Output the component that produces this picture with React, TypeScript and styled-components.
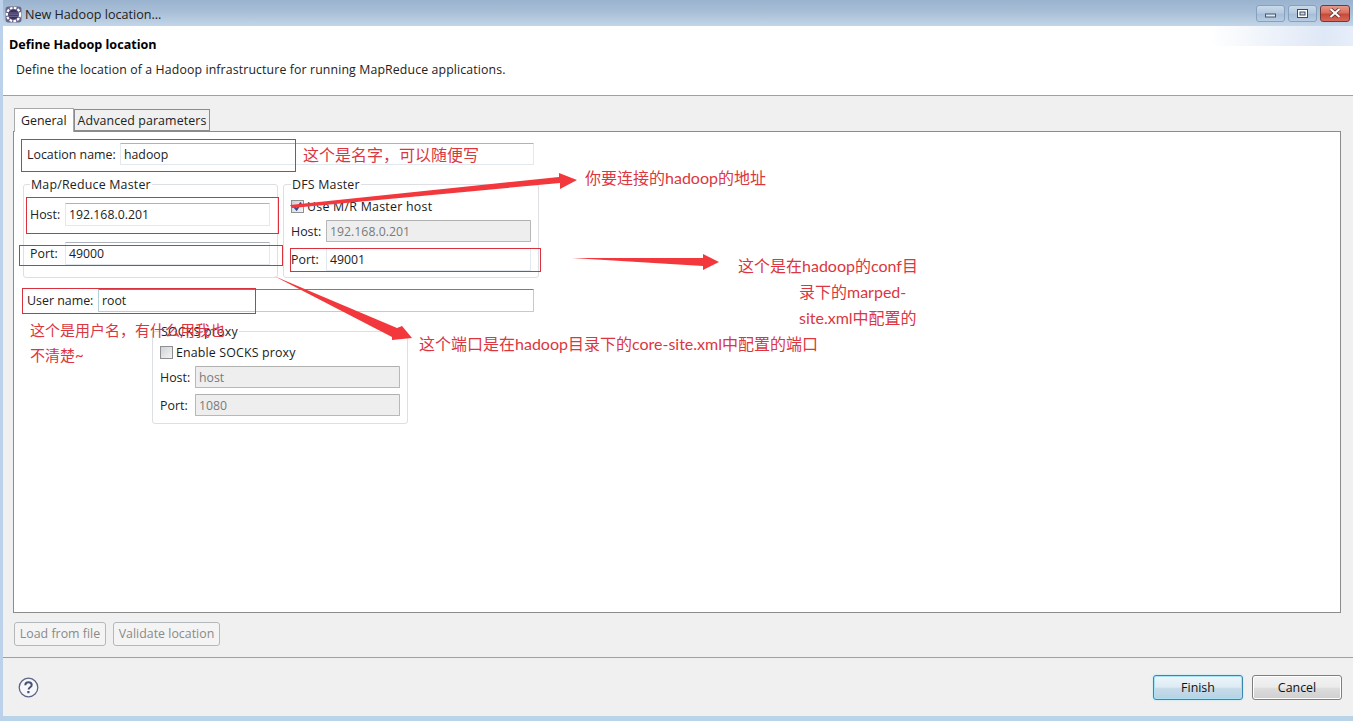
import React from "react";
import styled, { createGlobalStyle } from "styled-components";

const Global = createGlobalStyle`
  html, body { margin: 0; padding: 0; background: #f0f0f0; }
  * { box-sizing: border-box; }
`;

const Win = styled.div`
  position: relative;
  width: 1353px;
  height: 721px;
  overflow: hidden;
  display: flex;
  flex-direction: column;
  background: #f0f0f0;
  border-left: 3px solid #bcd2ea;
  border-bottom: 5px solid #b9d3e8;
  font-family: "Open Sans", "Noto Sans", sans-serif;
  font-size: 12.4px;
  color: #1a1a1a;
`;

const TitleBar = styled.div`
  height: 26px;
  flex: none;
  margin-left: -3px;
  padding: 3px 3px 0 5px;
  display: flex;
  align-items: center;
  gap: 3px;
  background: linear-gradient(180deg, #9ab3ce 0%, #a9c0d8 50%, #c3d6e8 100%);
`;

const TitleText = styled.span`
  flex: 1;
  font-size: 12.6px;
  color: #222;
`;

const WinBtns = styled.div`
  display: flex;
  gap: 3px;
  margin-top: -3px;
`;

const WinBtn = styled.div<{ $close?: boolean; $w: number }>`
  width: ${(p) => p.$w}px;
  height: 17px;
  display: flex;
  align-items: center;
  justify-content: center;
  border: 1px solid ${(p) => (p.$close ? "#6d3a3a" : "#86a1be")};
  border-radius: 3px;
  background: ${(p) =>
    p.$close
      ? "linear-gradient(180deg,#e8988a 0%,#d9705f 45%,#c84a38 55%,#d8685a 100%)"
      : "linear-gradient(180deg,#c9daea 0%,#b3c9e0 48%,#a5bdd8 55%,#b8cde3 100%)"};
`;

const Header = styled.div`
  height: 70px;
  flex: none;
  padding: 11px 0 0 6px;
  background:
    linear-gradient(90deg, rgba(255,255,255,1) 0%, #dfe8f6 80%, #e6eefa 100%) right top / 143px 20px no-repeat,
    #fff;
  border-bottom: 1px solid #a0a0a0;
`;

const HeaderTitle = styled.div`
  font-weight: 700;
  font-size: 12.6px;
  line-height: 16px;
  color: #000;
`;

const HeaderDesc = styled.div`
  margin: 9px 0 0 7px;
  font-size: 12.3px;
  line-height: 16px;
  letter-spacing: 0.13px;
  color: #222;
`;

const Body = styled.div`
  flex: 1;
  min-height: 0;
  display: flex;
  flex-direction: column;
  padding: 12px 12px 0 10px;
`;

const TabStrip = styled.div`
  display: flex;
  align-items: flex-end;
  height: 24px;
  margin-bottom: -1px;
  position: relative;
  z-index: 1;
`;

const Tab = styled.div<{ $active?: boolean }>`
  height: ${(p) => (p.$active ? 24 : 22)}px;
  padding: 0 ${(p) => (p.$active ? 6 : 3)}px;
  margin-left: ${(p) => (p.$active ? 1 : 0)}px;
  margin-bottom: ${(p) => (p.$active ? 0 : 1)}px;
  display: flex;
  align-items: center;
  font-size: 12.4px;
  letter-spacing: ${(p) => (p.$active ? 0 : 0.1)}px;
  background: ${(p) => (p.$active ? "#fff" : "#f0f0f0")};
  border: 1px solid ${(p) => (p.$active ? "#a9a9a9" : "#8c8c8c")};
  border-bottom: ${(p) => (p.$active ? "none" : "1px solid #8c8c8c")};
  color: #222;
`;

const Panel = styled.div`
  flex: 1;
  min-height: 0;
  background: #fff;
  border: 1px solid #8c8c8c;
  padding: 11px 0 0 9px;
`;

const Row = styled.div<{ $indent?: number; $width?: number }>`
  display: flex;
  align-items: center;
  margin-left: ${(p) => p.$indent ?? 0}px;
  width: ${(p) => (p.$width ? `${p.$width}px` : "auto")};
`;

const Label = styled.label<{ $w: number }>`
  flex: none;
  width: ${(p) => p.$w}px;
  color: #222;
`;

const Field = styled.div<{ $h?: number; $off?: boolean; $focus?: boolean }>`
  flex: 1;
  height: ${(p) => p.$h ?? 22}px;
  padding: 0 3px;
  display: flex;
  align-items: center;
  font-size: 12.3px;
  background: ${(p) => (p.$off ? "#eeeeee" : "#fff")};
  color: ${(p) => (p.$off ? "#7a7a7a" : "#222")};
  border: 1px solid ${(p) => (p.$off ? "#b8b8b8" : p.$focus ? "#b4d0dc" : "#e1e8ee")};
  border-top-color: ${(p) => (p.$off ? "#b0b0b0" : p.$focus ? "#5d86a3" : "#abb4bc")};
  border-radius: 1px;
`;

const Groups = styled.div`
  display: flex;
  gap: 5px;
  margin-top: 11px;
`;

const Group = styled.fieldset<{ $ml?: number; $pt: number; $pb: number; $w?: number; $pl?: number }>`
  margin: 0;
  margin-left: ${(p) => p.$ml ?? 0}px;
  width: ${(p) => p.$w ?? 256}px;
  min-width: 0;
  padding: ${(p) => p.$pt}px 7px ${(p) => p.$pb}px ${(p) => p.$pl ?? 7}px;
  border: 1px solid #dcdfe3;
  border-radius: 3px;
  display: flex;
  flex-direction: column;
`;

const Legend = styled.legend`
  padding: 0 1px;
  height: 16px;
  line-height: 18px;
  font-size: 12.4px;
  letter-spacing: 0.2px;
  color: #222;
`;

const CheckRow = styled.div<{ $tight?: boolean }>`
  display: flex;
  align-items: center;
  gap: 3px;
  height: 14px;
  margin-bottom: 7px;
  letter-spacing: ${(p) => (p.$tight ? 0.15 : 0.25)}px;
`;

const CheckBox = styled.div`
  width: 13px;
  height: 13px;
  flex: none;
  display: flex;
  align-items: center;
  justify-content: center;
  border: 1px solid #8e8f8f;
  background: linear-gradient(135deg, #cfd2d6, #f4f4f4);
`;

const Spaced = styled.div<{ $mt: number }>`
  margin-top: ${(p) => p.$mt}px;
`;

const ActionRow = styled.div`
  display: flex;
  gap: 7px;
  padding: 9px 0 0 1px;
  height: 44px;
  flex: none;
`;

const GhostBtn = styled.div<{ $w: number }>`
  width: ${(p) => p.$w}px;
  height: 24px;
  padding-bottom: 2px;
  display: flex;
  align-items: center;
  justify-content: center;
  border: 1px solid #b4b8bb;
  border-radius: 3px;
  background: #f4f4f4;
  color: #8a8a8a;
`;

const Footer = styled.div`
  height: 59px;
  flex: none;
  display: flex;
  align-items: center;
  justify-content: space-between;
  padding: 0 11px 0 15px;
  border-top: 1px solid #a0a0a0;
`;

const FooterBtns = styled.div`
  display: flex;
  gap: 9px;
`;

const DlgBtn = styled.div<{ $primary?: boolean }>`
  width: 90px;
  height: 25px;
  display: flex;
  align-items: center;
  justify-content: center;
  border-radius: 3px;
  color: #111;
  border: 1px solid ${(p) => (p.$primary ? "#3a86ac" : "#7f7f7f")};
  box-shadow: ${(p) => (p.$primary ? "0 0 2px #9fe3f7, inset 0 0 0 1px #a8e2f5" : "inset 0 0 0 1px #fff")};
  background: ${(p) =>
    p.$primary
      ? "linear-gradient(180deg,#eef6fb 0%,#dcebf4 48%,#c6dbe9 55%,#b7d2e4 100%)"
      : "linear-gradient(180deg,#f3f3f3 0%,#ebebeb 48%,#dcdcdc 55%,#cfcfcf 100%)"};
`;

const Overlay = styled.svg`
  position: absolute;
  left: -3px;
  top: 0;
  width: 1353px;
  height: 721px;
  z-index: 2;
  pointer-events: none;
`;

const Box = styled.div<{ $x: number; $y: number; $w: number; $h: number }>`
  position: absolute;
  z-index: 3;
  left: ${(p) => p.$x - 3}px;
  top: ${(p) => p.$y}px;
  width: ${(p) => p.$w}px;
  height: ${(p) => p.$h}px;
  border: 1px solid #d9323e;
`;

const Note = styled.div<{ $x: number; $y: number; $size?: number }>`
  position: absolute;
  z-index: 3;
  left: ${(p) => p.$x - 3}px;
  top: ${(p) => p.$y}px;
  white-space: nowrap;
  font-family: "Lato", "Noto Sans CJK SC", sans-serif;
  font-size: ${(p) => p.$size ?? 16}px;
  line-height: 26px;
  color: #dc3640;
`;

const EclipseIcon = () => (
  <svg width="17" height="17" viewBox="0 0 17 17">
    <rect x="0.5" y="0.5" width="16" height="16" rx="3" fill="#6a6488" />
    <circle cx="8.5" cy="8.5" r="6.6" fill="none" stroke="#fff" strokeWidth="2.2" strokeDasharray="2.6 1.3" />
    <circle cx="8.5" cy="8.5" r="5" fill="#3b3260" />
    <path d="M4.2 7h8.6M3.8 8.7h9.4M4.2 10.4h8.6" stroke="#8f88b4" strokeWidth="0.6" />
  </svg>
);

const MinGlyph = () => (
  <svg width="11" height="9" viewBox="0 0 11 9">
    <rect x="0.5" y="5" width="10" height="3" fill="#dfe8f0" stroke="#44566a" />
  </svg>
);
const MaxGlyph = () => (
  <svg width="11" height="9" viewBox="0 0 11 9">
    <rect x="0.5" y="0.5" width="10" height="8" fill="#fff" stroke="#3a4a5e" />
    <rect x="3" y="3" width="5" height="3" fill="#cfdcea" stroke="#3a4a5e" />
  </svg>
);
const CloseGlyph = () => (
  <svg width="12" height="10" viewBox="0 0 12 10">
    <path d="M1.5 1 L10.5 9 M10.5 1 L1.5 9" stroke="#5a2a2a" strokeWidth="3.6" />
    <path d="M1.5 1 L10.5 9 M10.5 1 L1.5 9" stroke="#fff" strokeWidth="2.2" />
  </svg>
);
const Tick = () => (
  <svg width="11" height="11" viewBox="0 0 11 11">
    <path d="M2 5.5 L4.6 8.5 L9 1.5" fill="none" stroke="#3d4a8c" strokeWidth="2" />
  </svg>
);
const HelpIcon = () => (
  <svg width="21" height="21" viewBox="0 0 21 21">
    <circle cx="10.5" cy="10.5" r="9.3" fill="#f6f7fb" stroke="#5e6488" strokeWidth="1.3" />
    <path d="M7.3 8.2c0-2 1.4-3 3.2-3s3.2 1 3.2 2.7c0 2.4-3.1 2.3-3.1 4.7" fill="none" stroke="#4a5070" strokeWidth="2" />
    <rect x="9.3" y="14" width="2.2" height="2.2" fill="#4a5070" />
  </svg>
);

export default function App() {
  return (
    <>
      <Global />
      <Win>
        <TitleBar>
          <EclipseIcon />
          <TitleText>New Hadoop location...</TitleText>
          <WinBtns>
            <WinBtn $w={29}><MinGlyph /></WinBtn>
            <WinBtn $w={29}><MaxGlyph /></WinBtn>
            <WinBtn $w={30} $close><CloseGlyph /></WinBtn>
          </WinBtns>
        </TitleBar>
        <Header>
          <HeaderTitle>Define Hadoop location</HeaderTitle>
          <HeaderDesc>Define the location of a Hadoop infrastructure for running MapReduce applications.</HeaderDesc>
        </Header>
        <Body>
          <TabStrip>
            <Tab $active>General</Tab>
            <Tab>Advanced parameters</Tab>
          </TabStrip>
          <Panel>
            <Row $indent={4} $width={507}>
              <Label $w={93}>Location name:</Label>
              <Field>hadoop</Field>
            </Row>
            <Groups>
              <Group $w={255} $pl={6} $pt={11} $pb={12}>
                <Legend>Map/Reduce Master</Legend>
                <Row>
                  <Label $w={35}>Host:</Label>
                  <Field $h={23}>192.168.0.201</Field>
                </Row>
                <Spaced $mt={16}>
                  <Row>
                    <Label $w={35}>Port:</Label>
                    <Field $h={23}>49000</Field>
                  </Row>
                </Spaced>
              </Group>
              <Group $pt={7} $pb={5}>
                <Legend>DFS Master</Legend>
                <CheckRow>
                  <CheckBox><Tick /></CheckBox>
                  Use M/R Master host
                </CheckRow>
                <Row>
                  <Label $w={35}>Host:</Label>
                  <Field $off>192.168.0.201</Field>
                </Row>
                <Spaced $mt={6}>
                  <Row>
                    <Label $w={35}>Port:</Label>
                    <Field $h={23}>49001</Field>
                  </Row>
                </Spaced>
              </Group>
            </Groups>
            <Spaced $mt={11}>
              <Row $indent={4} $width={507}>
                <Label $w={71}>User name:</Label>
                <Field $h={23} $focus>root</Field>
              </Row>
            </Spaced>
            <Spaced $mt={11}>
              <Group $ml={129} $pt={6} $pb={7}>
                <Legend>SOCKS proxy</Legend>
                <CheckRow $tight>
                  <CheckBox />
                  Enable SOCKS proxy
                </CheckRow>
                <Row>
                  <Label $w={35}>Host:</Label>
                  <Field $off>host</Field>
                </Row>
                <Spaced $mt={6}>
                  <Row>
                    <Label $w={35}>Port:</Label>
                    <Field $off>1080</Field>
                  </Row>
                </Spaced>
              </Group>
            </Spaced>
          </Panel>
          <ActionRow>
            <GhostBtn $w={92}>Load from file</GhostBtn>
            <GhostBtn $w={107}>Validate location</GhostBtn>
          </ActionRow>
        </Body>
        <Footer>
          <HelpIcon />
          <FooterBtns>
            <DlgBtn $primary>Finish</DlgBtn>
            <DlgBtn>Cancel</DlgBtn>
          </FooterBtns>
        </Footer>

        <Overlay viewBox="0 0 1353 721">
          <g fill="#f2383c">
            <polygon points="290,205 559,177 559,173 577,180 560,189 560,183 292,208" />
            <polygon points="572,258 703,258 703,254 719,262 703,270 703,266" />
            <polygon points="274,276 397,328 402,326 412,338 392,340 392,337" />
          </g>
        </Overlay>
        <Box $x={21} $y={139} $w={275} $h={33} />
        <Box $x={26} $y={197} $w={253} $h={37} />
        <Box $x={19} $y={245} $w={264} $h={21} />
        <Box $x={290} $y={248} $w={251} $h={24} />
        <Box $x={22} $y={288} $w={234} $h={26} />
        <Note $x={303} $y={142}>这个是名字，可以随便写</Note>
        <Note $x={585} $y={165}>你要连接的hadoop的地址</Note>
        <Note $x={738} $y={253}>这个是在hadoop的conf目</Note>
        <Note $x={799} $y={279}>录下的marped-</Note>
        <Note $x={799} $y={305}>site.xml中配置的</Note>
        <Note $x={419} $y={331}>这个端口是在hadoop目录下的core-site.xml中配置的端口</Note>
        <Note $x={30} $y={317} $size={15}>这个是用户名，有什么用我也</Note>
        <Note $x={30} $y={342} $size={15}>不清楚~</Note>
      </Win>
    </>
  );
}
